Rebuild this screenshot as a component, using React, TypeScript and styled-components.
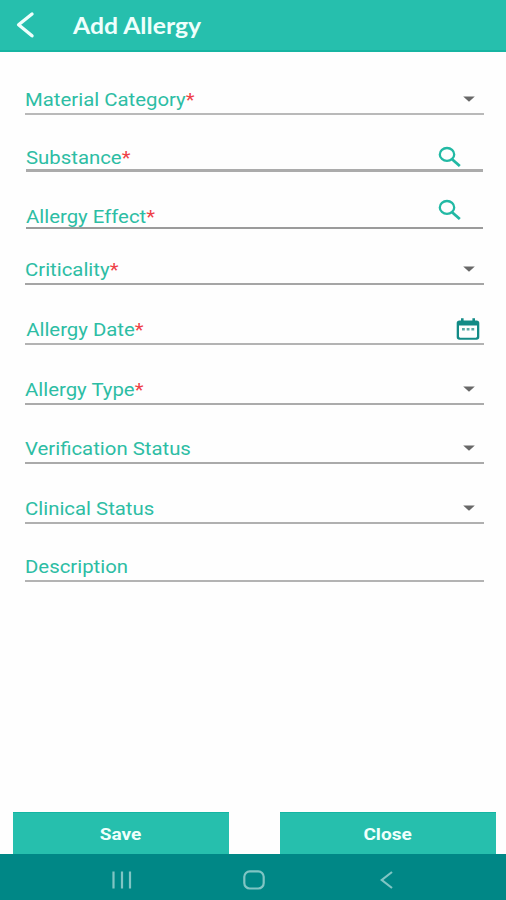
import React from "react";
import styled, { createGlobalStyle } from "styled-components";

const GlobalStyle = createGlobalStyle`
  * { box-sizing: border-box; }
  html, body { margin: 0; padding: 0; background: #fefefe; }
  body { font-family: Roboto, "Liberation Sans", sans-serif; }
`;

const Screen = styled.div`
  display: flex;
  flex-direction: column;
  width: 506px;
  height: 900px;
  overflow: hidden;
  background: #fefefe;
`;

const Header = styled.header`
  display: flex;
  align-items: center;
  flex: none;
  height: 52px;
  padding-left: 16px;
  background: #26bfad;
  border-bottom: 2px solid #17b5a2;
`;

const BackButton = styled.button`
  display: flex;
  width: 57px;
  padding: 0;
  border: 0;
  background: none;
`;

const Title = styled.h1`
  margin: 2px 0 0;
  font: 700 22px/26px Lato, Roboto, sans-serif;
  color: #effffc;
  transform: scaleX(1.125);
  transform-origin: left;
  white-space: nowrap;
`;

const Form = styled.main`
  flex: 1;
  display: flex;
  flex-direction: column;
`;

const FieldRow = styled.div<{ $height: number; $inset: boolean; $line: string; $thick: boolean }>`
  display: flex;
  align-items: flex-end;
  justify-content: space-between;
  flex: none;
  height: ${(p) => p.$height}px;
  margin: 0 ${(p) => (p.$inset ? 23 : 22)}px 0 ${(p) => (p.$inset ? 26 : 25)}px;
  border-bottom: ${(p) => (p.$thick ? 3 : 2)}px solid ${(p) => p.$line};
`;

const Label = styled.label<{ $lift: number; $indent: number }>`
  margin-bottom: ${(p) => p.$lift}px;
  padding-left: ${(p) => p.$indent}px;
  font-size: 17.5px;
  line-height: 20px;
  color: #2dbda4;
  white-space: nowrap;
  transform: translateY(0.6px) scaleX(1.163);
  transform-origin: left;
`;

const Required = styled.span`
  color: #ee4148;
`;

const Adornment = styled.span<{ $right: number; $lift: number }>`
  display: flex;
  margin: 0 ${(p) => p.$right}px ${(p) => p.$lift}px 0;
`;

const Actions = styled.div`
  display: flex;
  justify-content: space-between;
  flex: none;
  padding: 0 10px 0 13px;
`;

const ActionButton = styled.button`
  width: 216px;
  height: 42px;
  padding: 0;
  border: 0;
  border-top: 1px solid #14b5a3;
  background: #26bfad;
  color: #f0fffc;
  font: 700 17px/20px Roboto, sans-serif;
`;

const ActionText = styled.span`
  display: inline-block;
  transform: scaleX(1.12);
`;

const NavBar = styled.nav`
  display: grid;
  grid-template-columns: 132px 137px 22px;
  align-items: center;
  flex: none;
  height: 46px;
  padding: 5px 0 0 111px;
  background: #008786;
`;

const NavIcon = styled.svg`
  display: block;
  fill: none;
  stroke: #80c5c4;
  stroke-width: 2.2;
`;

type Kind = "select" | "search" | "date" | "text";

const Arrow = () => (
  <svg width="12" height="6" viewBox="0 0 12 6">
    <path d="M0.2 0.6H11.8L6 5.8Z" fill="#686868" />
  </svg>
);

const Search = () => (
  <svg width="24" height="21" viewBox="0 0 24 21" fill="none" stroke="#22b9a4">
    <ellipse cx="9" cy="8.4" rx="7.2" ry="6.4" strokeWidth="2.3" />
    <path d="M13.8 13L21.8 20" strokeWidth="2.8" />
  </svg>
);

const Calendar = () => (
  <svg width="24" height="22" viewBox="0 0 24 22">
    <path d="M5 0.2H7.6V2.4H16.4V0.2H19V2.4H20.5Q23.3 2.4 23.3 5V19Q23.3 21.8 20.5 21.8H3.5Q0.7 21.8 0.7 19V5Q0.7 2.4 3.5 2.4H5Z" fill="#128b86" />
    <path d="M3 7.6H21V18.6Q21 19.7 19.8 19.7H4.2Q3 19.7 3 18.6Z" fill="#fefefe" />
    <path d="M6 10H8.8V12.5H6ZM10.7 10H13.5V12.5H10.7ZM15.4 10H18.2V12.5H15.4Z" fill="#58aaa5" />
  </svg>
);

interface Field {
  label: string;
  kind: Kind;
  required?: boolean;
  height: number;
  lift: number;
  iconLift?: number;
  inset?: boolean;
  indent?: number;
  thick?: boolean;
  line: string;
}

const fields: Field[] = [
  { label: "Material Category", kind: "select", required: true, height: 63, lift: 4, iconLift: 11, line: "#b9b9b9" },
  { label: "Substance", kind: "search", required: true, height: 57, lift: 2, iconLift: 2, inset: true, thick: true, line: "#ababab" },
  { label: "Allergy Effect", kind: "search", required: true, height: 57, lift: 1, iconLift: 7, inset: true, line: "#9b9b9b" },
  { label: "Criticality", kind: "select", required: true, height: 56, lift: 4, iconLift: 11, line: "#a5a5a5" },
  { label: "Allergy Date", kind: "date", required: true, height: 60, lift: 4, iconLift: 3, indent: 1, line: "#b3b3b3" },
  { label: "Allergy Type", kind: "select", required: true, height: 60, lift: 4, iconLift: 11, line: "#ababab" },
  { label: "Verification Status", kind: "select", height: 59, lift: 4, iconLift: 11, line: "#aaaaaa" },
  { label: "Clinical Status", kind: "select", height: 60, lift: 4, iconLift: 11, line: "#b0b0b0" },
  { label: "Description", kind: "text", height: 58, lift: 4, line: "#b3b3b3" },
];

const iconFor = { select: Arrow, search: Search, date: Calendar, text: null };
const iconRight = { select: 9, search: 21, date: 4, text: 0 };

export default function App() {
  return (
    <>
      <GlobalStyle />
      <Screen>
        <Header>
          <BackButton aria-label="Back">
            <svg width="20" height="28" viewBox="0 0 20 28" fill="none" stroke="#effffc" strokeWidth="3.4" strokeLinecap="round" strokeLinejoin="round">
              <path d="M16 3L2.6 13.8L16 24.8" />
            </svg>
          </BackButton>
          <Title>Add Allergy</Title>
        </Header>
        <Form>
          {fields.map((f) => {
            const Icon = iconFor[f.kind];
            return (
              <FieldRow key={f.label} $height={f.height} $inset={!!f.inset} $line={f.line} $thick={!!f.thick}>
                <Label $lift={f.lift} $indent={f.indent ?? 0}>
                  {f.label}
                  {f.required && <Required>*</Required>}
                </Label>
                {Icon && (
                  <Adornment $right={iconRight[f.kind]} $lift={f.iconLift ?? 0}>
                    <Icon />
                  </Adornment>
                )}
              </FieldRow>
            );
          })}
        </Form>
        <Actions>
          <ActionButton>
            <ActionText>Save</ActionText>
          </ActionButton>
          <ActionButton>
            <ActionText>Close</ActionText>
          </ActionButton>
        </Actions>
        <NavBar>
          <NavIcon width="22" height="18" viewBox="0 0 22 18">
            <path d="M2.5 0.5V17.5M11 0.5V17.5M19 0.5V17.5" />
          </NavIcon>
          <NavIcon width="22" height="20" viewBox="0 0 22 20">
            <rect x="1.3" y="1.3" width="19.4" height="17.2" rx="5.5" />
          </NavIcon>
          <NavIcon width="14" height="18" viewBox="0 0 14 18">
            <path d="M12 1L1.8 9L12 17" />
          </NavIcon>
        </NavBar>
      </Screen>
    </>
  );
}
